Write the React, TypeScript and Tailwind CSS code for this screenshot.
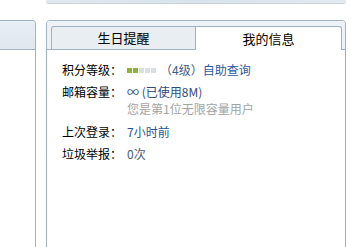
import React from 'react';

const font = { fontFamily: '"Noto Sans CJK SC", "Noto Sans", sans-serif' };

function LevelBar({ level = 2, total = 5 }: { level?: number; total?: number }) {
  return (
    <span className="inline-flex items-center gap-[1px] mr-[4px]">
      {Array.from({ length: total }, (_, i) => (
        <span
          key={i}
          className={i < level ? 'w-[5px] h-[5px] bg-[#8fb23c]' : 'w-[5px] h-[5px] bg-[#dadee3]'}
        />
      ))}
    </span>
  );
}

export default function App() {
  return (
    <div className="w-[355px] h-[247px] bg-white overflow-hidden text-[12px]" style={font}>
      {/* top strip */}
      <div className="flex">
        <div className="w-[46px]" />
        <div className="w-[300px] h-[4px] rounded-b-[3px] border-b border-[#c9d3dd] bg-gradient-to-r from-[#e2e8ee] via-[#d9e2ea] to-[#e3e9ef]" />
      </div>

      <div className="flex mt-[16px] gap-[10px]">
        {/* left panel (cut off) */}
        <div className="w-[36px] h-[227px] border-t border-r border-[#9fb1c4] rounded-tr-[4px]">
          <div className="h-[29px] border-b border-[#9fb1c4] bg-gradient-to-b from-[#e8eef4] to-[#dfe7ef] rounded-tr-[3px]" />
        </div>

        {/* right panel */}
        <div className="w-[300px] h-[240px] border border-[#9fb1c4] rounded-t-[4px] bg-white">
          <div className="h-[29px] flex items-end pl-[4px] border-b border-[#9fb1c4] bg-[#eef2f6] rounded-t-[3px]">
            <div className="w-[145px] h-[23px] flex items-center justify-center border-t border-l border-r border-[#9fb1c4] rounded-tl-[3px] bg-[#e9eef3] text-[13px] text-black">
              生日提醒
            </div>
            <div className="w-[146px] h-[24px] -mb-px flex items-center justify-center border-t border-r border-[#9fb1c4] rounded-tr-[3px] bg-white text-[13px] text-black">
              我的信息
            </div>
          </div>

          <div className="pl-[15px] pt-[9px]">
            <div className="flex items-center h-[22px]">
              <span className="w-[65px] text-black">积分等级：</span>
              <LevelBar level={2} total={5} />
              <span className="text-[#3d5d8c]">（4级）</span>
              <span className="text-[#1f5aa3]">自助查询</span>
            </div>
            <div className="flex items-center h-[22px]">
              <span className="w-[65px] text-black">邮箱容量：</span>
              <span className="text-[#2e4b7a]">∞ (已使用8M)</span>
            </div>
            <div className="flex items-center h-[16px] -mt-[2px] pl-[65px] text-[#a3a3a3]">
              您是第1位无限容量用户
            </div>
            <div className="flex items-center h-[22px] mt-[4px]">
              <span className="w-[65px] text-black">上次登录：</span>
              <span className="text-[#2a5293]">7小时前</span>
            </div>
            <div className="flex items-center h-[22px]">
              <span className="w-[65px] text-black">垃圾举报：</span>
              <span className="text-[#4a5a72]">0次</span>
            </div>
          </div>
        </div>
      </div>
    </div>
  );
}
